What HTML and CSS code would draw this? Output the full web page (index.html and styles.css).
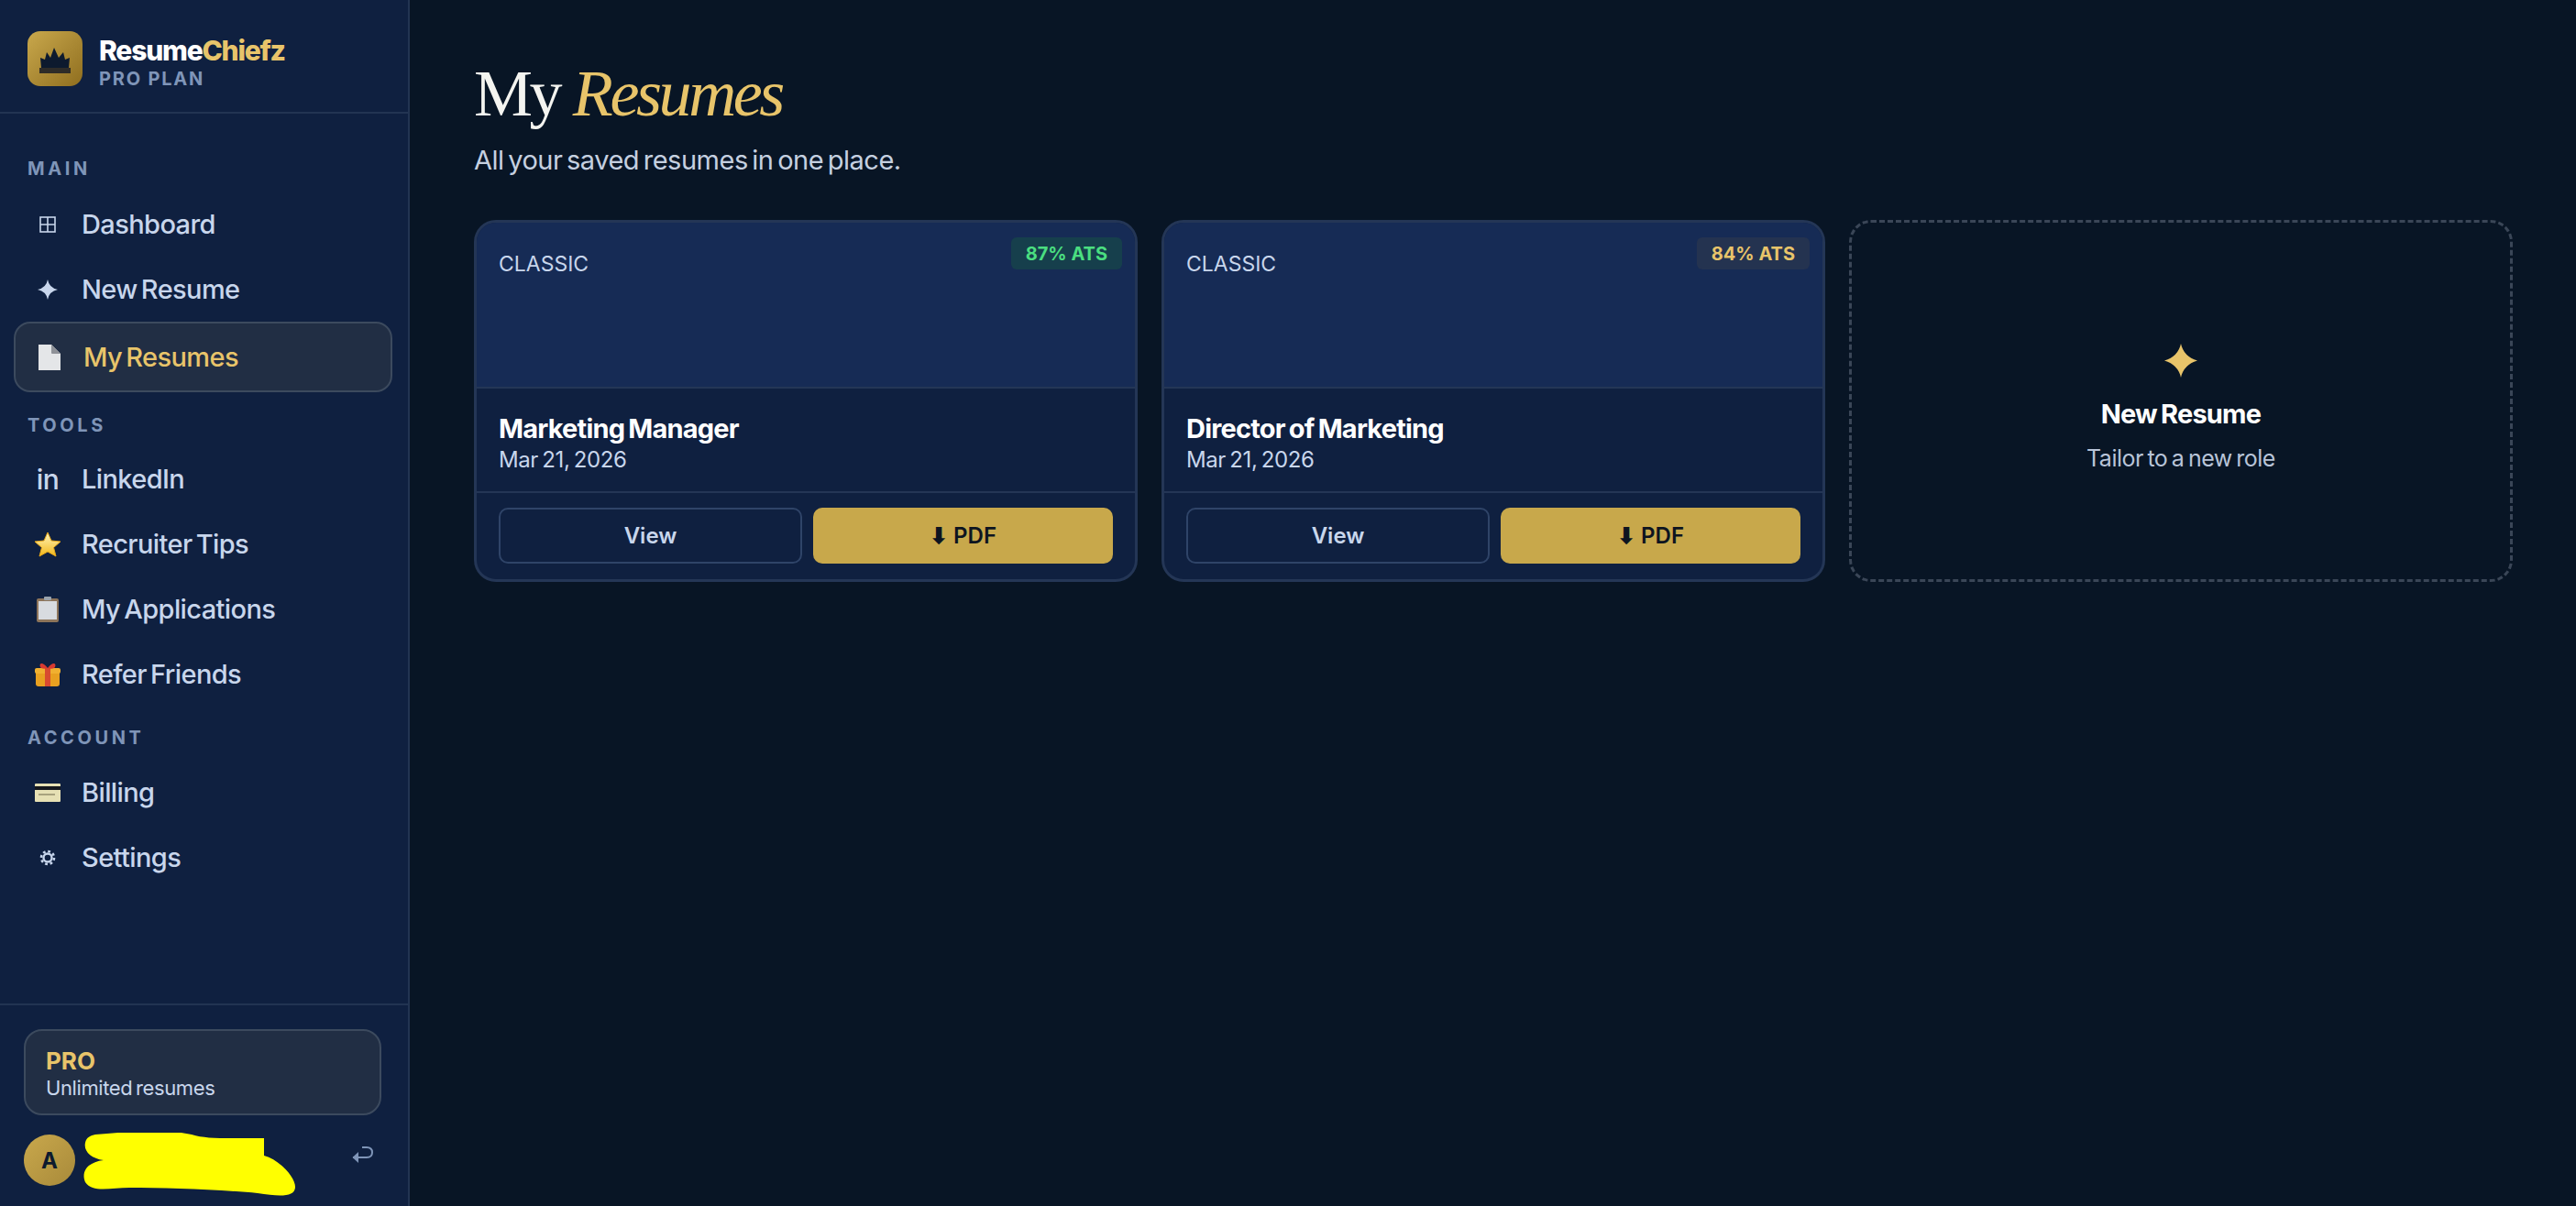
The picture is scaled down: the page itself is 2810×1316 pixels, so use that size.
FILE: index.html
```html
<!DOCTYPE html>
<html lang="en">
<head>
    <meta charset="UTF-8">
    <meta name="viewport" content="width=device-width, initial-scale=1.0">
    <title>My Resumes</title>
    <link rel="stylesheet" href="styles.css">
</head>
<body>
    <aside class="sidebar">
        <div class="brand">
            <div class="logo">
                <svg width="60" height="60" viewBox="0 0 60 60">
                    <path d="M15 40 L14 29 L19 31 L21 23 L25 29 L29 18 L34 29 L39 23 L41 31 L46 29 L45 40 Z" fill="#0d1a2e"/>
                    <rect x="13" y="40" width="34" height="6" fill="#2e2c28"/>
                </svg>
            </div>
            <div>
                <div class="brand-name">Resume<span class="gold">Chiefz</span></div>
                <div class="brand-plan">PRO PLAN</div>
            </div>
        </div>

        <nav class="nav">
            <div class="nav-label">MAIN</div>
            <a class="nav-item">
                <span class="nav-icon">
                    <svg width="18" height="18" viewBox="0 0 18 18" fill="none" stroke="#c8d6ec" stroke-width="1.6"><rect x="1" y="1" width="16" height="16"/><path d="M9 1V17M1 9H17"/></svg>
                </span>
                Dashboard
            </a>
            <a class="nav-item">
                <span class="nav-icon">
                    <svg width="22" height="22" viewBox="0 0 22 22"><path d="M11 0 Q12.5 9 22 11 Q12.5 13 11 22 Q9.500 13 0 11 Q9.500 9 11 0 Z" fill="#c8d6ec"/></svg>
                </span>
                New Resume
            </a>
            <a class="nav-item active">
                <span class="nav-icon">
                    <svg width="24" height="28" viewBox="0 0 24 28"><path d="M0 0H14L24 10V28H0Z" fill="#e4e6e8"/><path d="M14 0L24 10H15Q14 10 14 9Z" fill="#8f9298"/></svg>
                </span>
                My Resumes
            </a>

            <div class="nav-label tools">TOOLS</div>
            <a class="nav-item">
                <span class="nav-icon in">in</span>
                LinkedIn
            </a>
            <a class="nav-item">
                <span class="nav-icon">
                    <svg width="30" height="28" viewBox="0 0 30 28">
                        <defs><linearGradient id="starFill" x1="0" y1="0" x2="0" y2="1"><stop offset="0" stop-color="#fff6c0"/><stop offset="1" stop-color="#f2b818"/></linearGradient></defs>
                        <path d="M15 1 L19 10 L29 11 L21.500 17.500 L24 27 L15 22 L6 27 L8.500 17.500 L1 11 L11 10 Z" fill="url(#starFill)" stroke="#e8a818" stroke-width="1" stroke-linejoin="round"/>
                    </svg>
                </span>
                Recruiter Tips
            </a>
            <a class="nav-item">
                <span class="nav-icon">
                    <svg width="24" height="28" viewBox="0 0 24 28"><rect y="2" width="24" height="26" rx="2" fill="#8d745a"/><rect x="2" y="5" width="20" height="20" fill="#d8dbe0"/><rect x="8" y="0" width="8" height="4" rx="1" fill="#9aa3ad"/></svg>
                </span>
                My Applications
            </a>
            <a class="nav-item">
                <span class="nav-icon">
                    <svg width="28" height="28" viewBox="0 0 28 28">
                        <rect x="1" y="10" width="26" height="17" rx="3" fill="#e8a020"/>
                        <rect x="0" y="7" width="28" height="6" rx="2" fill="#f0b030"/>
                        <rect x="11" y="7" width="6" height="20" fill="#d84a30"/>
                        <path d="M14 7 C9 0 4 1 6 6 C7 8 11 8 14 7 C17 8 21 8 22 6 C24 1 19 0 14 7 Z" fill="#d83a30"/>
                    </svg>
                </span>
                Refer Friends
            </a>

            <div class="nav-label account">ACCOUNT</div>
            <a class="nav-item">
                <span class="nav-icon">
                    <svg width="28" height="20" viewBox="0 0 28 20"><rect width="28" height="20" rx="1" fill="#e6e0b4"/><rect y="3" width="28" height="4" fill="#15181e"/><rect x="4" y="11" width="18" height="2" fill="#a8a27e"/></svg>
                </span>
                Billing
            </a>
            <a class="nav-item">
                <span class="nav-icon">
                    <svg width="18" height="18" viewBox="0 0 18 18" fill="none" stroke="#c8d6ec"><circle cx="9" cy="9" r="4.500" stroke-width="2.400"/><circle cx="9" cy="9" r="7" stroke-width="2.600" stroke-dasharray="2.800 2.700"/></svg>
                </span>
                Settings
            </a>
        </nav>

        <div class="sidebar-foot">
            <div class="plan-box">
                <div class="plan-name">PRO</div>
                <div class="plan-note">Unlimited resumes</div>
            </div>
            <div class="user-row">
                <div class="avatar">A</div>
                <svg class="logout" width="24" height="20" viewBox="0 0 24 20" fill="none" stroke="#7f95b8" stroke-width="2"><path d="M2 13H17C21 13 23 11 23 7.500C23 4 21 2 17 2H12"/><path d="M8 7 L1.500 13 L8 19" fill="#7f95b8" stroke="none"/></svg>
            </div>
        </div>

        <!-- redaction mark from the screenshot -->
        <svg class="scribble" width="232" height="70" viewBox="0 0 232 70">
            <path d="M13 2 C60 -2 90 -4 118 2 C135 7 150 6 197 6 V25 C215 30 232 50 231 60 C230 70 215 70 190 66 C150 62 90 60 50 60 C30 60 10 66 2 54 C-3 42 5 32 22 30 C8 28 0 20 2 11 C3 5 8 3 13 2 Z" fill="#ffff00"/>
        </svg>
    </aside>

    <main class="main">
        <h1 class="page-title">My <em>Resumes</em></h1>
        <p class="page-sub">All your saved resumes in one place.</p>

        <div class="card-grid">
            <div class="card">
                <div class="preview">
                    <span class="template">CLASSIC</span>
                    <span class="badge badge-green">87% ATS</span>
                </div>
                <div class="card-info">
                    <div class="card-title">Marketing Manager</div>
                    <div class="card-date">Mar 21, 2026</div>
                </div>
                <div class="card-actions">
                    <button class="btn btn-view">View</button>
                    <button class="btn btn-pdf">⬇ PDF</button>
                </div>
            </div>

            <div class="card">
                <div class="preview">
                    <span class="template">CLASSIC</span>
                    <span class="badge badge-gold">84% ATS</span>
                </div>
                <div class="card-info">
                    <div class="card-title">Director of Marketing</div>
                    <div class="card-date">Mar 21, 2026</div>
                </div>
                <div class="card-actions">
                    <button class="btn btn-view">View</button>
                    <button class="btn btn-pdf">⬇ PDF</button>
                </div>
            </div>

            <div class="card-new">
                <svg width="36" height="37" viewBox="0 0 36 37"><path d="M18 0 Q21 14 36 18.500 Q21 23 18 37 Q15 23 0 18.500 Q15 14 18 0 Z" fill="#e8c46a"/></svg>
                <div class="new-title">New Resume</div>
                <div class="new-sub">Tailor to a new role</div>
            </div>
        </div>
    </main>
</body>
</html>
```

FILE: styles.css
```css
* {
    box-sizing: border-box;
}
html, body {
    height: 100%;
}
body {
    margin: 0;
    display: flex;
    height: 1316px;
    overflow: hidden;
    background-color: #081525;
    font-family: Inter, "Noto Sans", sans-serif;
    color: #c8d6ec;
}
.gold {
    color: #e8c46a;
}

/* Sidebar */
.sidebar {
    position: relative;
    width: 447px;
    flex-shrink: 0;
    display: flex;
    flex-direction: column;
    background-color: #0f2040;
    border-right: 2px solid #223452;
}
.brand {
    height: 124px;
    display: flex;
    align-items: flex-start;
    gap: 18px;
    padding: 34px 0 0 30px;
    border-bottom: 2px solid #223452;
}
.logo {
    width: 60px;
    height: 60px;
    border-radius: 14px;
    background: linear-gradient(135deg, #c9a84c, #8f6e1f);
}
.brand-name {
    font-size: 30px;
    font-weight: 800;
    line-height: 38px;
    letter-spacing: -1.2px;
    color: #fff;
    margin-top: 2px;
}
.brand-plan {
    font-size: 20px;
    font-weight: 700;
    line-height: 24px;
    letter-spacing: 1.8px;
    color: #7f95b8;
}
.nav {
    padding: 47px 17px 0 15px;
    display: flex;
    flex-direction: column;
}
.nav-label {
    font-size: 20px;
    font-weight: 700;
    line-height: 26px;
    letter-spacing: 3.6px;
    color: #7f95b8;
    padding-left: 15px;
    margin-bottom: 12px;
}
.nav-label.tools {
    margin-top: 23px;
    margin-bottom: 10px;
}
.nav-label.account {
    margin-top: 21px;
    margin-bottom: 11px;
}
.nav-item {
    height: 71px;
    display: flex;
    align-items: center;
    gap: 21px;
    padding-left: 21px;
    font-size: 29px;
    font-weight: 500;
    letter-spacing: -0.6px;
    word-spacing: -3px;
    color: #c8d6ec;
}
.nav-item.active {
    height: 77px;
    color: #e8c46a;
    background-color: #212e44;
    border: 2px solid #3c4a5e;
    border-radius: 18px;
}
.nav-icon {
    width: 32px;
    display: flex;
    justify-content: center;
    align-items: center;
}
.nav-icon.in {
    font-size: 30px;
}
.sidebar-foot {
    margin-top: auto;
    padding: 26px 29px 22px 26px;
    border-top: 2px solid #223452;
}
.plan-box {
    height: 94px;
    padding: 18px 22px;
    background-color: #212e44;
    border: 2px solid #3c4a5e;
    border-radius: 20px;
}
.plan-name {
    font-size: 26px;
    font-weight: 700;
    line-height: 30px;
    color: #e8c46a;
}
.plan-note {
    font-size: 22px;
    line-height: 28px;
    letter-spacing: -0.4px;
    word-spacing: -2px;
}
.user-row {
    margin-top: 21px;
    display: flex;
    align-items: center;
    justify-content: space-between;
    padding-right: 9px;
}
.avatar {
    width: 56px;
    height: 56px;
    border-radius: 50%;
    background: linear-gradient(135deg, #c9a84c, #a88a3a);
    color: #0d1a2e;
    font-size: 24px;
    font-weight: 700;
    display: flex;
    align-items: center;
    justify-content: center;
}
.logout {
    margin-top: -12px;
}
.scribble {
    position: absolute;
    left: 91px;
    top: 1236px;
}

/* Main */
.main {
    flex: 1;
    padding: 56px 69px 0 70px;
}
.page-title {
    margin: 0;
    font-family: "Liberation Serif", serif;
    font-size: 72px;
    font-weight: 400;
    line-height: 92px;
    letter-spacing: -3.4px;
    color: #f4f4f0;
}
.page-title em {
    color: #e8c46a;
}
.page-sub {
    margin: 8px 0 0;
    font-size: 29px;
    line-height: 38px;
    letter-spacing: -0.5px;
    word-spacing: -3px;
    color: #c5d0e0;
}
.card-grid {
    margin-top: 46px;
    display: grid;
    grid-template-columns: repeat(3, 1fr);
    gap: 26px;
}
.card {
    height: 395px;
    display: flex;
    flex-direction: column;
    background-color: #0f2040;
    border: 3px solid #243656;
    border-radius: 24px;
    overflow: hidden;
}
.preview {
    position: relative;
    height: 181px;
    padding: 30px 24px 0;
    background-color: #162b55;
    border-bottom: 2px solid #243656;
}
.template {
    font-size: 23px;
    line-height: 30px;
    color: #c8d6ec;
}
.badge {
    position: absolute;
    top: 16px;
    right: 14px;
    height: 35px;
    padding: 0 16px;
    display: flex;
    align-items: center;
    font-size: 20px;
    font-weight: 700;
    border-radius: 6px;
}
.badge-green {
    background-color: #163f4c;
    color: #4ade80;
}
.badge-gold {
    background-color: #243350;
    color: #e8c46a;
}
.card-info {
    height: 114px;
    padding: 26px 24px 0;
    border-bottom: 2px solid #243656;
}
.card-title {
    font-size: 29px;
    font-weight: 700;
    line-height: 36px;
    letter-spacing: -0.8px;
    word-spacing: -2px;
    color: #fff;
}
.card-date {
    font-size: 24px;
    line-height: 32px;
    letter-spacing: -0.4px;
    word-spacing: -2px;
    color: #c8d6ec;
}
.card-actions {
    flex: 1;
    display: flex;
    gap: 12px;
    padding: 16px 24px 0;
}
.btn {
    flex: 1;
    height: 61px;
    border-radius: 10px;
    font-family: inherit;
    font-size: 24px;
    font-weight: 600;
}
.btn-view {
    background-color: #0f2040;
    border: 2px solid #2f4468;
    color: #c8d6ec;
}
.btn-pdf {
    background-color: #c8a84b;
    border: none;
    color: #0d1420;
}
.card-new {
    height: 395px;
    display: flex;
    flex-direction: column;
    align-items: center;
    padding-top: 132px;
    border: 3px dashed #3a4657;
    border-radius: 24px;
}
.new-title {
    margin-top: 22px;
    font-size: 29px;
    font-weight: 700;
    line-height: 36px;
    letter-spacing: -0.8px;
    word-spacing: -2px;
    color: #fff;
}
.new-sub {
    margin-top: 14px;
    font-size: 25px;
    line-height: 32px;
    letter-spacing: -0.5px;
    word-spacing: -2px;
    color: #b8c4d8;
}
```
